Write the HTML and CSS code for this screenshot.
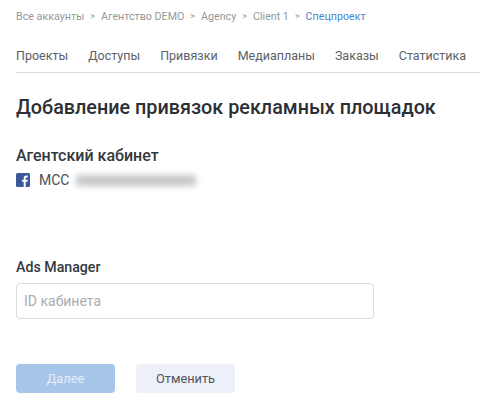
FILE: index.html
```html
<!DOCTYPE html>
<html lang="ru">
<head>
<meta charset="utf-8">
<title>Добавление привязок</title>
<link rel="stylesheet" href="styles.css">
</head>
<body>
<nav class="crumbs">
  <span>Все аккаунты</span><i>&gt;</i><span>Агентство DEMO</span><i>&gt;</i><span>Agency</span><i>&gt;</i><span>Client 1</span><i>&gt;</i><span class="current">Спецпроект</span>
</nav>
<div class="tabs">
  <span>Проекты</span><span>Доступы</span><span>Привязки</span><span>Медиапланы</span><span>Заказы</span><span>Статистика</span>
</div>
<h1>Добавление привязок рекламных площадок</h1>
<h2>Агентский кабинет</h2>
<div class="account">
  <svg class="fb" viewBox="0 0 14 14" width="14" height="14"><rect width="14" height="14" rx="1.5" fill="#3b5998"/><path d="M9.7 14V8.7h1.7l.3-2H9.7V5.5c0-.6.2-1 1-1h1.1V2.700c-.2 0-.8-.1-1.500-.1-1.600 0-2.600 1-2.600 2.700v1.400H6v2h1.700V14z" fill="#fff"/></svg>
  <span>MCC</span>
  <span class="blurred"></span>
</div>
<label class="field-label" for="cab">Ads Manager</label>
<input class="field" id="cab" placeholder="ID кабинета">
<div class="actions">
  <button class="btn primary">Далее</button>
  <button class="btn secondary">Отменить</button>
</div>
</body>
</html>
```

FILE: styles.css
```css
html, body { margin: 0; padding: 0; }
body {
  width: 480px;
  height: 411px;
  overflow: hidden;
  background: #fff;
  font-family: Roboto, "Noto Sans", sans-serif;
  color: #33383d;
  padding-left: 16px;
  box-sizing: border-box;
}
.crumbs {
  display: flex;
  align-items: center;
  height: 16px;
  margin-top: 8px;
  font-size: 10.700px;
  color: #95989c;
}
.crumbs i { font-style: normal; margin: 0 6px; font-size: 9px; }
.crumbs .current { color: #4a86d0; }
.tabs {
  display: flex;
  gap: 20px;
  width: 464px;
  height: 25px;
  margin-top: 23px;
  font-size: 12.500px;
  line-height: 17px;
  color: #5c6166;
  border-bottom: 1px solid #dcdde0;
}
h1 {
  margin: 23px 0 0;
  font-size: 19.800px;
  line-height: 24px;
  font-weight: 500;
  color: #2c3035;
}
h2 {
  margin: 26px 0 0;
  font-size: 16px;
  line-height: 20px;
  font-weight: 500;
}
.account {
  display: flex;
  align-items: center;
  gap: 9px;
  margin-top: 5px;
  height: 18px;
  font-size: 14px;
  color: #4b5056;
}
.fb { flex: none; }
.blurred {
  width: 120px;
  height: 11px;
  margin-left: -2px;
  background: #c6c6c8;
  filter: blur(3px);
}
.field-label {
  display: block;
  margin-top: 69px;
  font-size: 14.200px;
  line-height: 18px;
  font-weight: 500;
}
.field {
  display: block;
  width: 358px;
  height: 36px;
  margin-top: 7px;
  padding: 0 7px;
  box-sizing: border-box;
  border: 1px solid #d9dadd;
  border-radius: 4px;
  font: 14px Roboto, sans-serif;
  outline: none;
}
.field::placeholder { color: #a9acb0; opacity: 1; }
.actions { display: flex; gap: 21px; margin-top: 45px; }
.btn {
  width: 99px;
  height: 29px;
  padding: 0;
  border: 0;
  border-radius: 4px;
  font: 12.800px Roboto, sans-serif;
}
.primary { background: #a6c6e9; color: #e4edf7; }
.secondary { background: #edf0f9; color: #50555b; }
```
